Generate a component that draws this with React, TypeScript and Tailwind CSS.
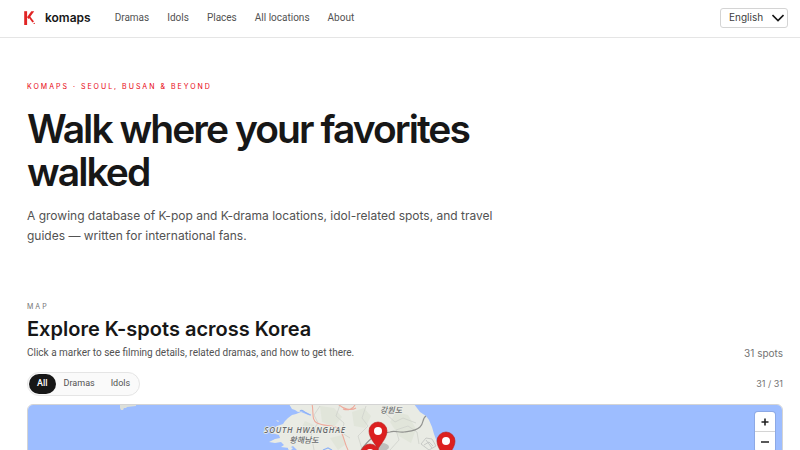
import { useState } from "react";

const links = ["Dramas", "Idols", "Places", "All locations", "About"];
const filters = ["All", "Dramas", "Idols"];

function Logo() {
  return (
    <svg className="h-4 w-4" viewBox="0 0 16 16" aria-hidden="true">
      <path d="M2.2 1.2h2.9V15H2.2z" fill="#e02424" />
      <path d="M5 7.2 9.3 1.2h2.9L6.6 9z" fill="#e02424" />
      <path d="M6 6.6 7.6 5.8 12 11.6 10.4 12.6z" fill="#e02424" />
      <circle cx="12.2" cy="13.4" r=".7" fill="#e02424" />
    </svg>
  );
}

function Pin({ x, y }: { x: number; y: number }) {
  return (
    <g transform={`translate(${x} ${y})`}>
      <path
        d="M0 18C-2.5 13-9 7-9 0a9 9 0 0 1 18 0C9 7 2.5 13 0 18Z"
        fill="#dc2020"
        stroke="#b91c1c"
        strokeWidth="0.6"
      />
      <circle r="4" fill="#fff" />
    </g>
  );
}

function KoreaMap() {
  return (
    <svg
      className="block h-full w-full"
      viewBox="28 405 754 318"
      preserveAspectRatio="xMidYMin slice"
      role="img"
      aria-label="Map of K-spots in Korea"
    >
      <rect x="-1000" y="400" width="3000" height="400" fill="#9dbdff" />
      <path d="M120 404h16v2l-9 1-1 1-2 0-1 2h-2l-1-2z" fill="#dcdfd9" />
      <path
        d="M289 404 292 409 295 410 298 412 303 411 308 413 311 416 306 414 301 412 296 414 292 415 288 418 285 421 283 424 277 426 274 428 276 431 272 433 279 435 280 438 275 439 269 442 275 443 281 442 284 445 281 447 289 448 293 446 298 451 304 470 318 540 332 620 340 730H440L445 560 440 450 437 442 434 434 432 427 429 420 426 416 420 412 417 408 414 404Z"
        fill="#e9ebe4"
      />
      <path d="m276 420 3 1-1 1zM288 446l5 2-3 3-2-2z" fill="#e9ebe4" />
      <g fill="#dde2d5" opacity=".7">
        <path d="m320 406 14 2 8 9-8 10-12-5zM352 412l12-4 7 8-6 12-11-2zM396 412l12 3 8 14-5 14-12-7-9-14zM305 421l9 4-2 8-12-2zM330 438l12-3 4 9-8 6z" />
      </g>
      <g fill="none" stroke="#cfd2cc" strokeWidth=".8">
        <path d="M320 406l-6 9 4 8-7 10 3 17M340 405l-4 11 8 7-2 10 8 5M366 406l-4 12 6 8-10 10 4 13M392 406l-6 8 9 8 8-4 13 5M390 450l9-10-3-10 12-4 9 6 2 12" />
        <path d="M421 444l5-6 6 1 4 7-7 4zM424 445l5-3 4 4M426 440l6 8" stroke="#bfc2bf" />
      </g>
      <g fill="none" stroke="#8fb3f5" strokeWidth="1.2">
        <path d="M300 411c3-3 4 3 11 4M323 450l5-2 4 2" />
      </g>
      <g fill="none" stroke="#eea99b" strokeWidth="1.1">
        <path d="M312 404c2 8-1 16 5 19 8 4 16 1 22 6 5 5 5 14 9 21" />
        <path d="M338 404c5 5 13 7 18 4M343 409c5 2 10 0 12-4" />
      </g>
      <path
        d="M361 450c3-4 6-8 11-12 4-4 12-5 18-6 5-2 9 1 14 0 7-1 12-1 16-5 4-3 2-9 6-11"
        fill="none"
        stroke="#929390"
        strokeWidth="1.2"
      />
      <ellipse cx="382" cy="447" rx="7" ry="4" fill="#bfc0bd" />
      <g fill="#686a6c" stroke="#eef0ea" strokeWidth="1.5" paintOrder="stroke" textAnchor="middle" fontStyle="italic">
        <text x="305" y="433" className="font-['Open_Sans','Noto_Sans',sans-serif] text-[8px] font-semibold tracking-widest">
          SOUTH HWANGHAE
        </text>
        <text x="304" y="443" className="font-['Noto_Sans_CJK_KR',sans-serif] text-[8px] font-medium">
          황해남도
        </text>
        <text x="391" y="413" className="font-['Noto_Sans_CJK_KR',sans-serif] text-[8px] font-medium">
          강원도
        </text>
      </g>
      <Pin x={370} y={453} />
      <Pin x={378} y={431} />
      <Pin x={446} y={441} />
    </svg>
  );
}

export default function App() {
  const [active, setActive] = useState("All");
  return (
    <div className="min-h-screen bg-white font-['Inter',sans-serif] text-neutral-900">
      <header className="flex h-[38px] items-center border-b border-neutral-200 pr-3 pb-[2px] pl-[22px]">
        <a href="#" className="flex items-center gap-[7px] text-[12px] font-semibold leading-4">
          <Logo />
          komaps
        </a>
        <nav className="ml-6 flex gap-[18px] font-['Roboto',sans-serif] text-[10px] leading-4 text-neutral-600">
          {links.map((l) => (
            <a key={l} href="#">
              {l}
            </a>
          ))}
        </nav>
        <div className="relative ml-auto">
          <select
            aria-label="Language"
            className="block h-5 w-[68px] appearance-none rounded-[3px] border border-neutral-300 bg-white pl-2 text-[10px] text-neutral-700"
          >
            <option>English</option>
            <option>한국어</option>
          </select>
          <svg className="pointer-events-none absolute top-1 right-1 h-3 w-3" viewBox="0 0 12 12" aria-hidden="true">
            <path d="M.5 3 6 8.500 11.500 3" fill="none" stroke="#171717" strokeWidth="1.6" />
          </svg>
        </div>
      </header>

      <main className="pr-[17px] pl-[27px]">
        <section className="max-w-[480px] pt-[43px]">
          <p className="text-[7px] leading-3 tracking-[2px] text-red-600">KOMAPS · SEOUL, BUSAN &amp; BEYOND</p>
          <h1 className="mt-[14px] text-[39px] leading-[43px] font-semibold tracking-tighter">
            Walk where your favorites walked
          </h1>
          <p className="mt-[13px] text-[12px] leading-5 text-neutral-600">
            A growing database of K-pop and K-drama locations, idol-related spots, and travel guides — written for
            international fans.
          </p>
        </section>

        <section className="mt-[55px]">
          <p className="text-[7px] leading-3 tracking-[2px] text-neutral-500">MAP</p>
          <h2 className="mt-[2px] text-[20px] leading-7 font-semibold">Explore K-spots across Korea</h2>
          <div className="mt-[2px] flex items-center justify-between text-[10px] leading-4">
            <p className="font-['Roboto',sans-serif] text-neutral-600">
              Click a marker to see filming details, related dramas, and how to get there.
            </p>
            <p className="text-neutral-500">31 spots</p>
          </div>
          <div className="mt-[11px] flex items-center justify-between">
            <div className="flex h-6 items-center rounded-full border border-neutral-200 bg-neutral-50 p-[1px] font-['Roboto',sans-serif]">
              {filters.map((f) => (
                <button
                  key={f}
                  type="button"
                  aria-pressed={active === f}
                  onClick={() => setActive(f)}
                  className={
                    active === f
                      ? "h-5 rounded-full bg-neutral-900 px-2 text-[9px] font-medium text-white"
                      : "h-5 rounded-full px-2 text-[9px] text-neutral-600"
                  }
                >
                  {f}
                </button>
              ))}
            </div>
            <p className="text-[9px] leading-4 text-neutral-500">31 / 31</p>
          </div>
          <div className="relative mt-2 h-80 overflow-hidden rounded-md border border-neutral-300">
            <KoreaMap />
            <div className="absolute top-[7px] right-[7px] flex w-5 flex-col divide-y divide-neutral-300 overflow-hidden rounded-[3px] bg-white ring-1 ring-black/10">
              <button type="button" aria-label="Zoom in" className="flex h-5 items-center justify-center">
                <svg className="h-2 w-2" viewBox="0 0 8 8" aria-hidden="true">
                  <path d="M4 .5v7M.5 4h7" stroke="#222" strokeWidth="1.6" />
                </svg>
              </button>
              <button type="button" aria-label="Zoom out" className="flex h-5 items-center justify-center">
                <svg className="h-2 w-2" viewBox="0 0 8 8" aria-hidden="true">
                  <path d="M0 4h8" stroke="#222" strokeWidth="1.6" />
                </svg>
              </button>
            </div>
          </div>
        </section>
      </main>
    </div>
  );
}
